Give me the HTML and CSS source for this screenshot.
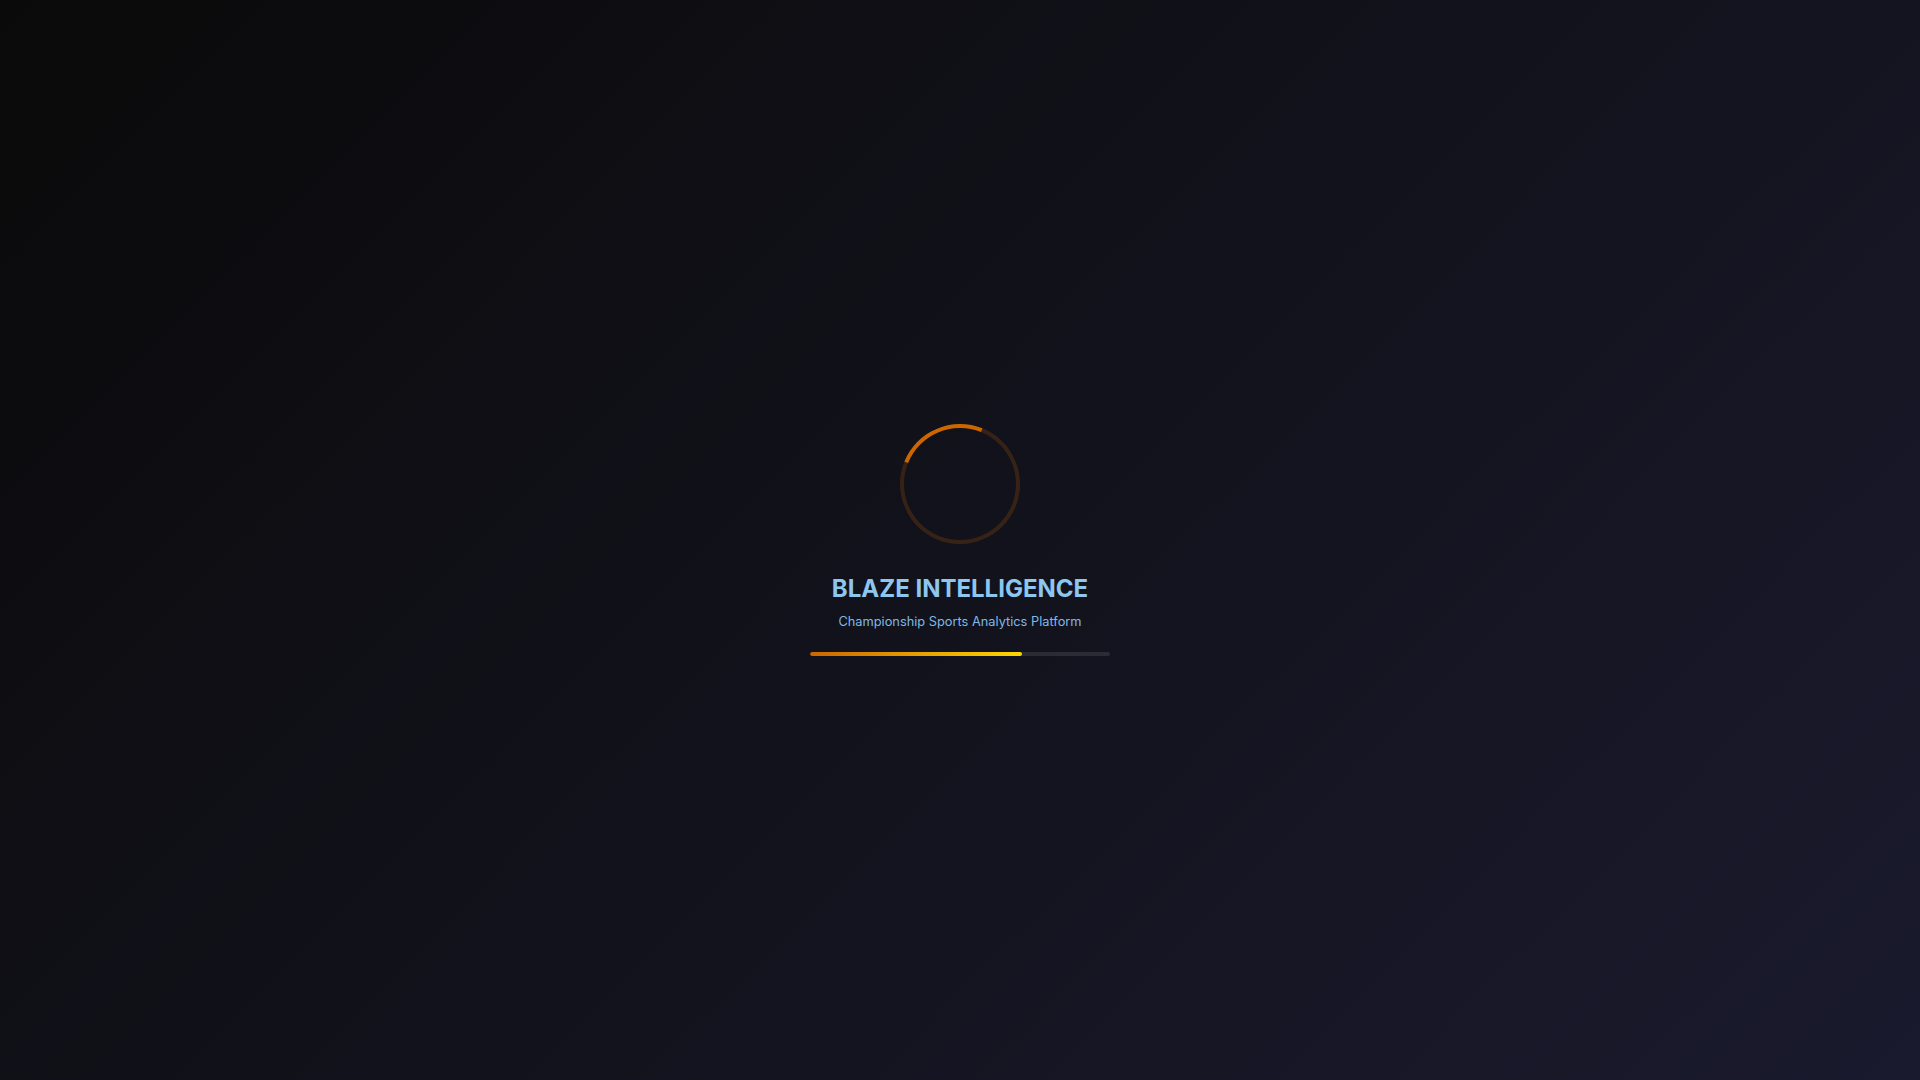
FILE: index.html
```html
<!DOCTYPE html>
<html lang="en">
<head>
<meta charset="utf-8">
<title>Blaze Intelligence</title>
<link rel="stylesheet" href="styles.css">
</head>
<body>
<div class="loader">
  <div class="spinner"></div>
  <h1 class="title">BLAZE INTELLIGENCE</h1>
  <p class="subtitle">Championship Sports Analytics Platform</p>
  <div class="progress"><div class="progress-fill" style="width:70.7%"></div></div>
</div>
</body>
</html>
```
FILE: styles.css
```css
* { box-sizing: border-box; }
html, body { height: 100%; }
body {
  margin: 0;
  background: linear-gradient(135deg, #0a0a0a 0%, #1a1a2e 100%);
  font-family: Inter, "Noto Sans", sans-serif;
  display: flex;
  align-items: center;
  justify-content: center;
}
.loader {
  display: flex;
  flex-direction: column;
  align-items: center;
}
.spinner {
  width: 120px;
  height: 120px;
  border-radius: 50%;
  border: 4px solid rgba(204, 102, 0, 0.2);
  border-top-color: #cc6600;
  transform: rotate(-23deg);
  margin-bottom: 30px;
}
.title {
  margin: 0;
  font-size: 24px;
  line-height: 29px;
  font-weight: 700;
  color: #8dc7ef;
}
.subtitle {
  margin: 10px 0 0;
  font-size: 12.8px;
  line-height: 17px;
  color: #7fb9e6;
}
.progress {
  margin-top: 22px;
  width: 300px;
  height: 4px;
  border-radius: 2px;
  background: rgba(255, 255, 255, 0.1);
  overflow: hidden;
}
.progress-fill {
  height: 100%;
  border-radius: 2px;
  background: linear-gradient(90deg, #cc6600, #ffd700);
}
```
